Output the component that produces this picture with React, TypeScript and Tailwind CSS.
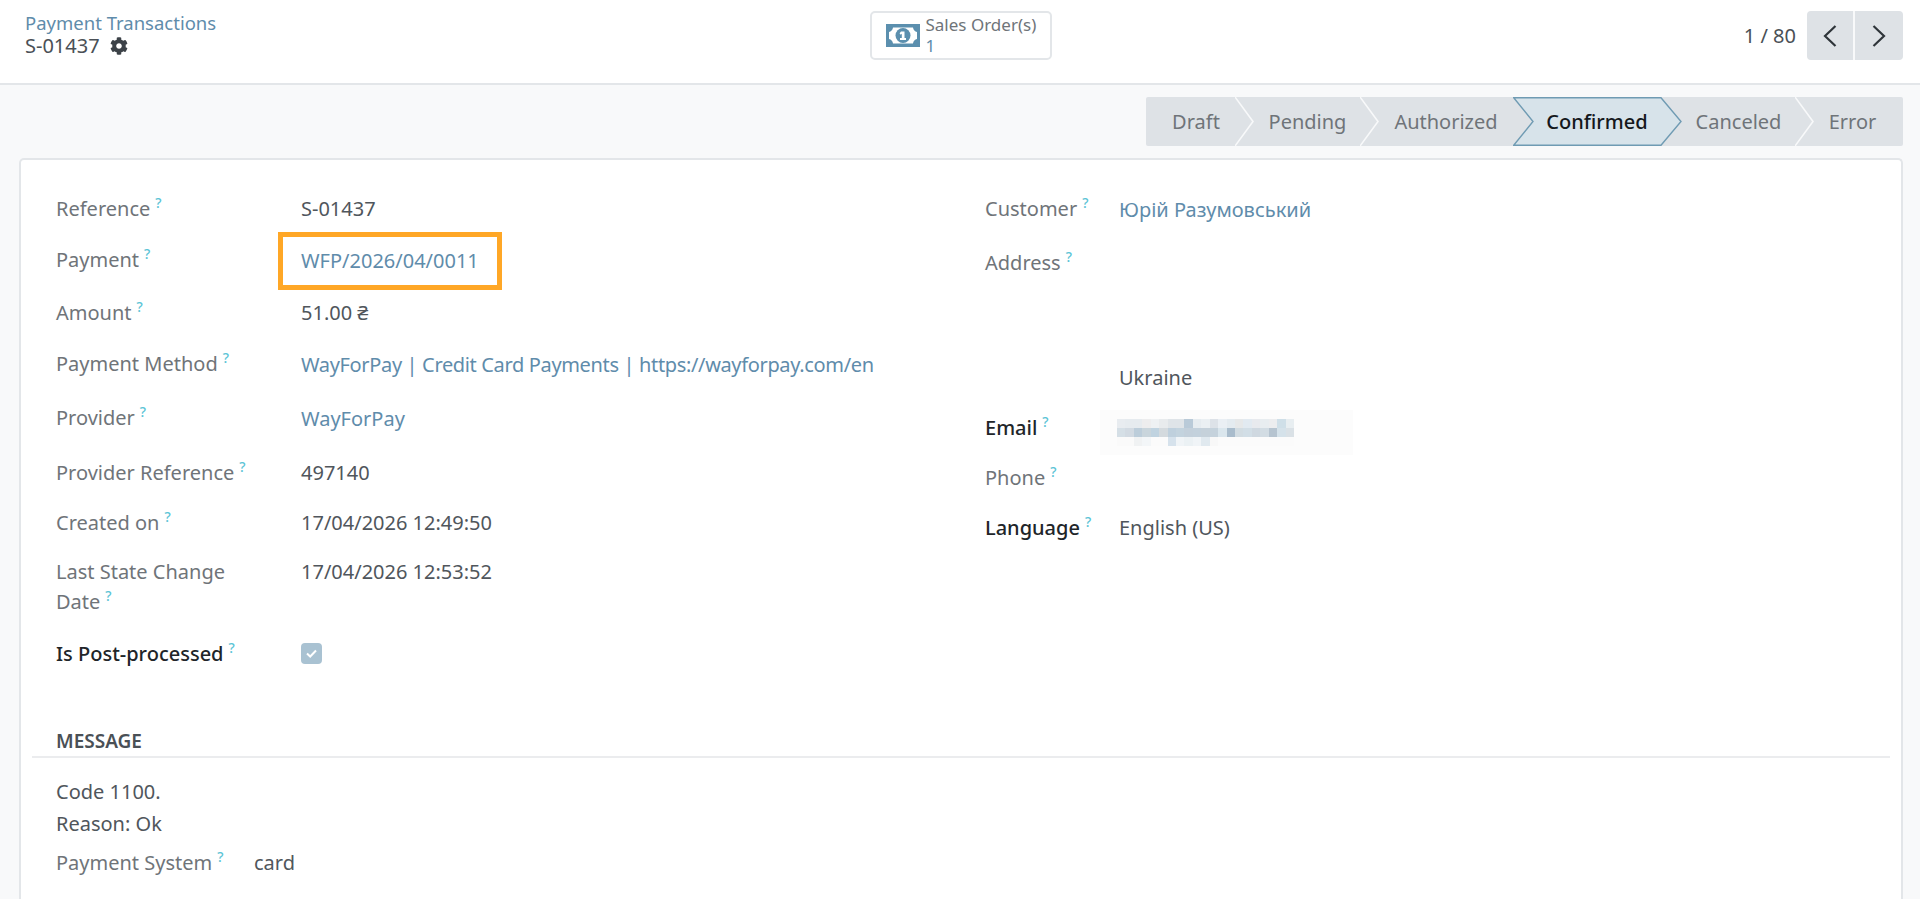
import React from "react";
import { FaCog } from "react-icons/fa";

const Q = () => (
  <span className="relative top-[-8px] ml-[5px] inline-block h-[12px] align-baseline text-[14px] font-medium leading-[12px] text-[#5cc4d6]">?</span>
);

const L = ({ children, bold, w }: { children: React.ReactNode; bold?: boolean; w: string }) => (
  <div className={`${w} shrink-0 ${bold ? "font-medium text-[#212529]" : "text-[#6f7479]"}`}>
    {children}
    <Q />
  </div>
);

const link = "text-[#5f8cab]";
const val = "text-[#50565c]";

const leftRows: { l: React.ReactNode; k: string; v?: string; link?: boolean; h: string; check?: boolean; bold?: boolean; box?: boolean; tight?: boolean }[] = [
  { k: "ref", l: "Reference", v: "S-01437", h: "h-[51px]" },
  { k: "pay", l: "Payment", v: "WFP/2026/04/0011", link: true, h: "h-[53px]", box: true },
  { k: "amt", l: "Amount", v: "51.00 ₴", h: "h-[51px]" },
  { k: "met", l: "Payment Method", v: "WayForPay | Credit Card Payments | https://wayforpay.com/en", link: true, h: "h-[54px]", tight: true },
  { k: "pro", l: "Provider", v: "WayForPay", link: true, h: "h-[55px]" },
  { k: "prr", l: "Provider Reference", v: "497140", h: "h-[50px]" },
  { k: "cre", l: "Created on", v: "17/04/2026 12:49:50", h: "h-[49px]" },
  { k: "las", l: <>Last State Change<br />Date</>, v: "17/04/2026 12:53:52", h: "h-[82px]" },
  { k: "isp", l: "Is Post-processed", check: true, bold: true, h: "h-[30px]" },
];

const mosaic = [
  ["#e8ecf0","#e6ebef","#e6ebef","#ededee","#eef1f3","#e8ebed","#dfe4e8","#dfe4e8","#b9cad8","#e6ecf0","#ebf0f3","#dde2e8","#eaeff4","#e4ebf0","#e6e8e9","#e2eaf1","#e8eaee","#e8edf0","#ecedef","#cfdfe8","#e8eef1"],
  ["#d5dfe6","#d2dae2","#bccdda","#c9d5dc","#c0d3e0","#d4dade","#bfd0dd","#c3d3de","#c3d0db","#c3d1dc","#c5d1da","#c5d2dc","#dae6ed","#a9bccc","#d2dce2","#d2dee6","#cfd8e0","#d2dce3","#b6c4d0","#d5e2ea","#dae1e6"],
  ["#fafafa","#fafafa","#f0f2f3","#f3f6f8","#fbfbfb","#fbfbfb","#d6e2ec","#f0f4f7","#ebf1f4","#f0f4f7","#e0e9ef","#f8f8f8","#fbfbfb","#fbfbfb","#fbfbfb","#fbfbfb","#fbfbfb","#fbfbfb","#fbfbfb","#fbfbfb","#fbfbfb"],
];

const steps = [
  { t: "Draft", w: "w-[90px]", pad: "pl-[10px]" },
  { t: "Pending", w: "w-[125px]", pad: "pl-[18px]" },
  { t: "Authorized", w: "w-[152px]", pad: "pl-[18px]" },
  { t: "Confirmed", w: "w-[148px]", active: true, pad: "" },
  { t: "Canceled", w: "w-[135px]", pad: "pl-[20px]" },
  { t: "Error", w: "w-[107px]", pad: "pl-[6px]" },
];

const Sep = () => (
  <svg className="absolute left-full top-0 z-10 -ml-[1px]" width="20" height="49" viewBox="0 0 20 49" fill="none">
    <polyline points="0,0 18,24.5 0,49" stroke="#f8f9fa" strokeWidth="1.6" />
  </svg>
);

const Money = () => (
  <svg width="34" height="23" viewBox="0 0 34 23">
    <path
      fillRule="evenodd"
      fill="#5b8fae"
      d="M0 0h34v23H0zM7 3.5C6.7 6 5 7.6 3 8v7c2 .4 3.7 2 4 4.500h20c.3-2.500 2-4.100 4-4.500V8c-2-.4-3.700-2-4-4.500z"
    />
    <ellipse cx="17" cy="11.500" rx="7.500" ry="7.500" fill="#5b8fae" />
    <path fill="#fff" d="M15 7.500h3.500v6.500h1.500v2h-6v-2h1.800V9.800l-1.200.9-1-1.400z" />
  </svg>
);

export default function App() {
  return (
    <div className="flex h-[899px] w-[1920px] flex-col overflow-hidden bg-[#f8f9fa] font-['Noto_Sans',sans-serif] text-[20px] leading-[30px]">
      <header className="grid h-[85px] shrink-0 grid-cols-[1fr_auto_1fr] items-start border-b-2 border-[#e3e6e9] bg-white">
        <div className="pl-[25px] pt-[8px]">
          <div className={`text-[18.500px] leading-[30px] ${link}`}>Payment Transactions</div>
          <div className="-mt-[7px] flex items-center gap-[10px] text-[20px] leading-[30px] text-[#4a5056]">
            S-01437
            <FaCog className="text-[18px] text-[#3c4248]" />
          </div>
        </div>
        <div className="ml-[1px] mt-[11px] flex h-[49px] w-[182px] items-center gap-[6px] rounded-[5px] border-2 border-[#e3e6e9] bg-white pl-[14px]">
          <Money />
          <div className="-mt-[2px] text-[17px] leading-[21px]">
            <div className="text-[#6f7479]">Sales Order(s)</div>
            <div className={link}>1</div>
          </div>
        </div>
        <div className="flex items-center justify-end pr-[17px] pt-[11px]">
          <span className="mr-[11px] text-[#4a5056]">1 / 80</span>
          <div className="flex h-[49px] overflow-hidden rounded-[4px] bg-[#dee2e6]">
            <button className="flex w-[48px] items-center justify-center border-r-2 border-[#f8f9fa]">
              <svg width="14" height="22" viewBox="0 0 14 22" fill="none"><polyline points="12.500,1 2,11 12.500,21" stroke="#2f353a" strokeWidth="2.200" /></svg>
            </button>
            <button className="flex w-[48px] items-center justify-center">
              <svg width="14" height="22" viewBox="0 0 14 22" fill="none"><polyline points="1.500,1 12,11 1.500,21" stroke="#2f353a" strokeWidth="2.200" /></svg>
            </button>
          </div>
        </div>
      </header>

      <div className="mt-[12px] flex shrink-0 justify-end pr-[17px]">
        <div className="flex h-[49px] rounded-[2px] bg-[#dee2e6]">
          {steps.map((s, i) =>
            s.active ? (
              <div key={s.t} className={`relative z-20 ${s.w} flex items-center justify-center pl-[20px] font-medium text-[#14181c]`}>
                <svg className="absolute left-0 top-0 -z-10" width="170" height="49" viewBox="0 0 170 49">
                  <polygon points="0.7,0.7 148,0.7 168,24.500 148,48.300 0.7,48.300 20,24.500" fill="#d7e3ea" stroke="#6f9bb3" strokeWidth="1.400" />
                </svg>
                {s.t}
              </div>
            ) : (
              <div key={s.t} className={`relative ${s.w} flex items-center justify-center text-[#6f7479] ${s.pad}`}>
                {s.t}
                {i < steps.length - 1 && steps[i + 1]?.active !== true && <Sep />}
              </div>
            )
          )}
        </div>
      </div>

      <main className="ml-[19px] mr-[17px] mt-[12px] min-h-0 flex-1 rounded-t-[5px] border-2 border-b-0 border-[#e3e6e9] bg-white pl-[35px]">
        <div className="flex pt-[34px]">
          <div className="w-[929px] shrink-0">
            {leftRows.map((r) => (
              <div key={r.k} className={`flex ${r.h}`}>
                <L w="w-[245px] pr-[50px]" bold={r.bold}>{r.l}</L>
                {r.check ? (
                  <div className="mt-[4px] flex h-[21px] w-[21px] items-center justify-center rounded-[4px] bg-[#a9c2d2]">
                    <svg width="13" height="13" viewBox="0 0 13 13" fill="none"><polyline points="2,6.500 5.200,9.500 11,3.500" stroke="#fff" strokeWidth="2" /></svg>
                  </div>
                ) : (
                  <div className={`relative h-[30px] ${r.link ? `mt-[1px] ${link}` : val} ${r.tight ? "tracking-[-0.35px]" : ""}`}>
                    {r.v}
                    {r.box && <div className="absolute left-[-23px] top-[-14px] h-[58px] w-[224px] border-[5px] border-[#ffa726]" />}
                  </div>
                )}
              </div>
            ))}
          </div>
          <div className="flex-1">
            <div className="flex h-[54px]">
              <L w="w-[134px]">Customer</L>
              <div className={`mt-[1px] ${link}`}>Юрій Разумовський</div>
            </div>
            <div className="flex h-[165px]">
              <L w="w-[134px]">Address</L>
              <div className={`mt-[115px] ${val}`}>Ukraine</div>
            </div>
            <div className="flex h-[50px]">
              <L w="w-[134px]" bold>Email</L>
              <div className="-ml-[19px] -mt-[3px] h-[45px] w-[253px] bg-[#fcfcfc] pl-[17px] pt-[9px]">
                <div className="grid w-[177px] grid-cols-[repeat(21,1fr)]">
                  {mosaic.flat().map((c, i) => (
                    <div key={i} className="h-[9px]" style={{ backgroundColor: c }} />
                  ))}
                </div>
              </div>
            </div>
            <div className="flex h-[50px]">
              <L w="w-[134px]">Phone</L>
            </div>
            <div className="flex h-[30px]">
              <L w="w-[134px]" bold>Language</L>
              <div className={val}>English (US)</div>
            </div>
          </div>
        </div>
        <div className="-ml-[24px] mr-[11px] mt-[57px] border-b-2 border-[#ebecee] pl-[24px] text-[19px] font-semibold leading-[30px] text-[#4a5056]">
          MESSAGE
        </div>
        <div className={`mt-[18px] leading-[32px] ${val}`}>
          <div>Code 1100.</div>
          <div>Reason: Ok</div>
        </div>
        <div className="mt-[8px] flex">
          <L w="w-[198px]">Payment System</L>
          <div className={val}>card</div>
        </div>
      </main>
    </div>
  );
}
